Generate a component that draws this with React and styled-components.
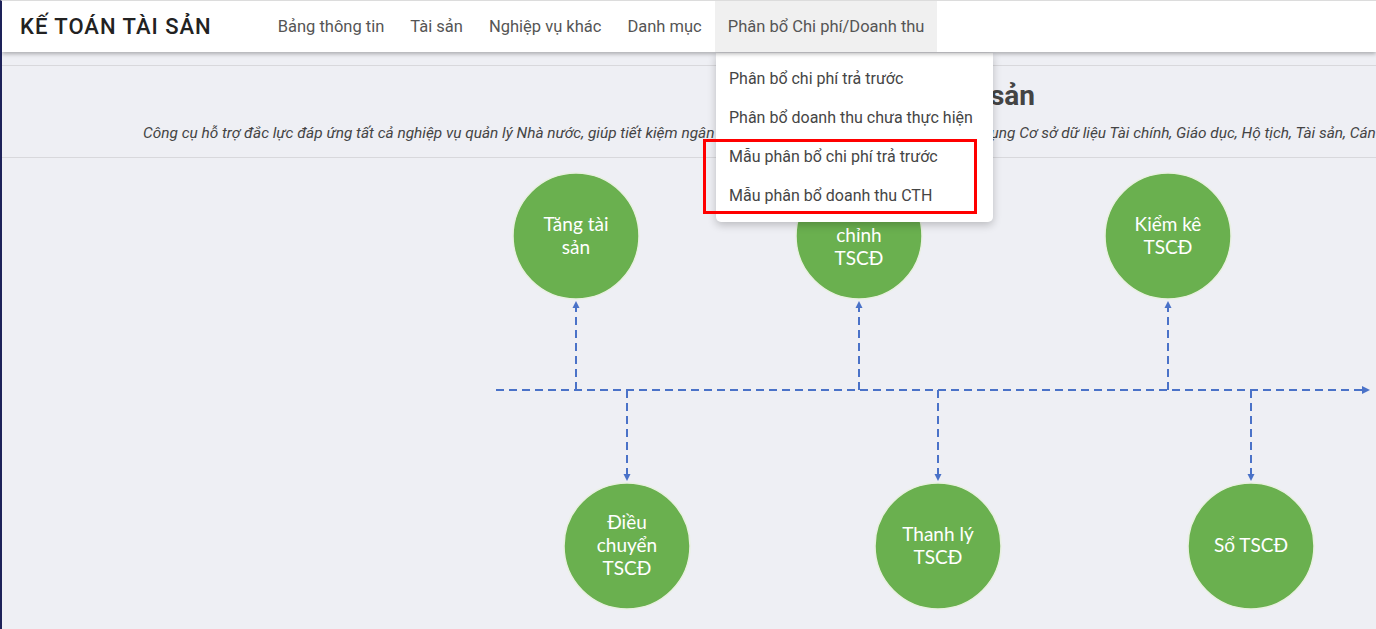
import React from "react";
import styled, { createGlobalStyle } from "styled-components";

const GlobalStyle = createGlobalStyle`
  html, body {
    margin: 0;
    padding: 0;
    background: #eeeff4;
    overflow: hidden;
    font-family: Roboto, "Liberation Sans", sans-serif;
  }
`;

const Page = styled.div`
  position: relative;
  height: 629px;
  border-left: 2px solid #1d2259;
  border-top: 1px solid #dcdcdc;
  box-sizing: border-box;
  overflow: hidden;
`;

const Header = styled.header`
  position: relative;
  z-index: 2;
  display: flex;
  align-items: stretch;
  height: 51px;
  background: #fff;
  box-shadow: 0 2px 4px rgba(0, 0, 0, 0.28);
`;

const Logo = styled.div`
  display: flex;
  align-items: center;
  padding-left: 18px;
  font-size: 22px;
  font-weight: 500;
  letter-spacing: 1px;
  color: #222;
`;

const Nav = styled.nav`
  display: flex;
  margin-left: 53px;
`;

const NavItem = styled.div`
  display: flex;
  align-items: center;
  padding: 0 13px;
  font-size: 16.5px;
  color: #555;
  background: ${(p) => (p.active ? "#f0f0f0" : "transparent")};
`;

const Dropdown = styled.div`
  position: absolute;
  left: 714px;
  top: 52px;
  width: 277px;
  padding: 6px 0 7px;
  background: #fff;
  border-radius: 0 0 5px 5px;
  box-shadow: 0 3px 8px rgba(0, 0, 0, 0.22);
`;

const DropItem = styled.div`
  height: 39px;
  line-height: 39px;
  padding-left: 13px;
  font-size: 16px;
  color: #454545;
  white-space: nowrap;
`;

const Highlight = styled.div`
  position: absolute;
  left: 701px;
  top: 138px;
  width: 274px;
  height: 75px;
  border: 3px solid #ff0000;
  box-sizing: border-box;
  z-index: 3;
`;

const Hero = styled.section`
  padding-top: 13px;
`;

const Rule = styled.div`
  height: 1px;
  background: #d8d8dc;
`;

const Title = styled.h1`
  margin: 0;
  width: 1033px;
  text-align: right;
  font-size: 28px;
  font-weight: 700;
  color: #444;
  line-height: 36px;
  padding-top: 12px;
`;

const Subtitle = styled.p`
  margin: 0;
  padding: 9px 0 14px 141px;
  font-size: 15.4px;
  font-style: italic;
  color: #444;
  white-space: nowrap;
  line-height: 20px;
`;

const Diagram = styled.svg`
  display: block;
`;

const topNodes = [
  { x: 576, lines: ["Tăng tài", "sản"] },
  { x: 859, lines: ["Điều", "chỉnh", "TSCĐ"] },
  { x: 1168, lines: ["Kiểm kê", "TSCĐ"] },
];

const bottomNodes = [
  { x: 627, lines: ["Điều", "chuyển", "TSCĐ"] },
  { x: 938, lines: ["Thanh lý", "TSCĐ"] },
  { x: 1251, lines: ["Sổ TSCĐ"] },
];

const LINE_Y = 232;
const TOP_Y = 78;
const BOTTOM_Y = 388;
const R = 63;
const BLUE = "#4a72c8";

const Node = ({ x, y, lines }) => {
  const start = y - ((lines.length - 1) * 23) / 2 + 6;
  return (
    <g>
      <circle cx={x} cy={y} r={R} fill="#6ab04f" stroke="#e8f0e0" strokeWidth="1.5" />
      {lines.map((l, i) => (
        <text
          key={l}
          x={x}
          y={start + i * 23}
          textAnchor="middle"
          fill="#fff"
          fontSize="19"
          fontFamily="Lato, 'Open Sans', sans-serif"
        >
          {l}
        </text>
      ))}
    </g>
  );
};

const Arrow = ({ x, y, dir }) => {
  const d =
    dir === "up"
      ? `M${x} ${y} L${x - 3.5} ${y + 7} L${x + 3.5} ${y + 7} Z`
      : dir === "down"
      ? `M${x} ${y} L${x - 3.5} ${y - 7} L${x + 3.5} ${y - 7} Z`
      : `M${x} ${y} L${x - 8} ${y - 4} L${x - 8} ${y + 4} Z`;
  return <path d={d} fill={BLUE} />;
};

export default function App() {
  const dash = { stroke: BLUE, strokeWidth: 2, strokeDasharray: "8 5", fill: "none" };
  return (
    <Page>
      <GlobalStyle />
      <Header>
        <Logo>KẾ TOÁN TÀI SẢN</Logo>
        <Nav>
          <NavItem>Bảng thông tin</NavItem>
          <NavItem>Tài sản</NavItem>
          <NavItem>Nghiệp vụ khác</NavItem>
          <NavItem>Danh mục</NavItem>
          <NavItem active>Phân bổ Chi phí/Doanh thu</NavItem>
        </Nav>
      </Header>
      <Dropdown>
        <DropItem>Phân bổ chi phí trả trước</DropItem>
        <DropItem>Phân bổ doanh thu chưa thực hiện</DropItem>
        <DropItem>Mẫu phân bổ chi phí trả trước</DropItem>
        <DropItem>Mẫu phân bổ doanh thu CTH</DropItem>
      </Dropdown>
      <Highlight />
      <Hero>
        <Rule />
        <Title>Kế toán Tài sản</Title>
        <Subtitle>
          Công cụ hỗ trợ đắc lực đáp ứng tất cả nghiệp vụ quản lý Nhà nước, giúp tiết kiệm ngân sách, nâng cao hiệu quả quản lý và ứng dụng Cơ sở dữ liệu Tài chính, Giáo dục, Hộ tịch, Tài sản, Cán bộ
        </Subtitle>
        <Rule />
      </Hero>
      <Diagram width="1374" height="470" viewBox="0 0 1374 470">
        <path d={`M494 ${LINE_Y} H1360`} {...dash} />
        <Arrow x={1368} y={LINE_Y} dir="right" />
        {topNodes.map((n) => (
          <g key={n.x}>
            <path d={`M${n.x - 2} ${LINE_Y} V${TOP_Y + R + 8}`} {...dash} />
            <Arrow x={n.x - 2} y={TOP_Y + R + 2} dir="up" />
            <Node x={n.x - 2} y={TOP_Y} lines={n.lines} />
          </g>
        ))}
        {bottomNodes.map((n) => (
          <g key={n.x}>
            <path d={`M${n.x - 2} ${LINE_Y} V${BOTTOM_Y - R - 8}`} {...dash} />
            <Arrow x={n.x - 2} y={BOTTOM_Y - R - 2} dir="down" />
            <Node x={n.x - 2} y={BOTTOM_Y} lines={n.lines} />
          </g>
        ))}
      </Diagram>
    </Page>
  );
}
